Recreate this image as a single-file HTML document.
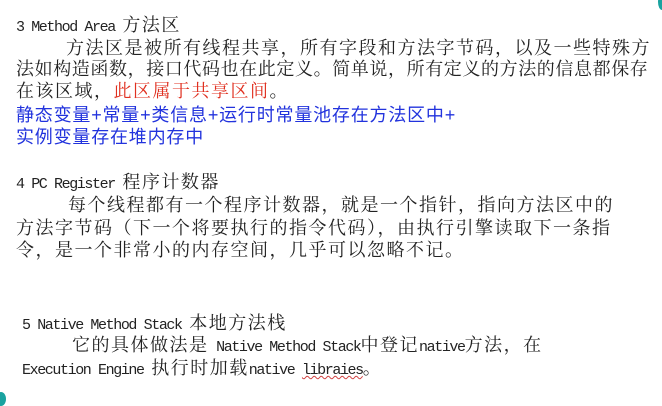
<!DOCTYPE html>
<html><head><meta charset="utf-8"><style>
body{margin:0;width:662px;height:402px;background:#fff;position:relative;overflow:hidden}
.l{position:absolute;white-space:nowrap;font-family:"Liberation Serif","Noto Serif CJK SC",serif;font-size:18px;line-height:22px;color:#222;letter-spacing:1.5px}
.m{font-family:"Liberation Mono",monospace;font-size:15px;letter-spacing:-1.4px}
.b{font-family:"Liberation Sans","Noto Sans CJK SC",sans-serif;color:#2233dd;font-size:18px;letter-spacing:0.8px}
.r{color:#e03020}
.u{text-decoration:underline wavy #d04040;text-decoration-thickness:1px}
</style></head><body>
<div style="position:absolute;right:-4px;top:-6px;width:8px;height:16px;border-radius:50%;background:#1aa3a0"></div>
<div style="position:absolute;left:-4px;bottom:-4px;width:10px;height:14px;border-radius:50%;background:#1aa3a0"></div>

<div class="l" style="left:16px;top:14px"><span class="m">3 Method Area </span>方法区</div>
<div class="l" style="left:66px;top:37px">方法区是被所有线程共享，所有字段和方法字节码，以及一些特殊方</div>
<div class="l" style="left:16px;top:58px;letter-spacing:0.6px">法如构造函数，接口代码也在此定义。简单说，所有定义的方法的信息都保存</div>
<div class="l" style="left:16px;top:80px">在该区域，<span class="r">此区属于共享区间</span>。</div>
<div class="l b" style="left:16px;top:104px">静态变量+常量+类信息+运行时常量池存在方法区中+</div>
<div class="l b" style="left:16px;top:126px">实例变量存在堆内存中</div>

<div class="l" style="left:16px;top:171px"><span class="m">4 PC Register </span>程序计数器</div>
<div class="l" style="left:68px;top:194px">每个线程都有一个程序计数器，就是一个指针，指向方法区中的</div>
<div class="l" style="left:16px;top:217px">方法字节码（下一个将要执行的指令代码），由执行引擎读取下一条指</div>
<div class="l" style="left:16px;top:239px">令，是一个非常小的内存空间，几乎可以忽略不记。</div>

<div class="l" style="left:22px;top:312px"><span class="m">5 Native Method Stack </span>本地方法栈</div>
<div class="l" style="left:72px;top:334px">它的具体做法是<span class="m"> Native Method Stack</span>中登记<span class="m">native</span>方法，在</div>
<div class="l" style="left:22px;top:357px"><span class="m">Execution Engine </span>执行时加载<span class="m">native <span class="u">libraies</span></span>。</div>
</body></html>
